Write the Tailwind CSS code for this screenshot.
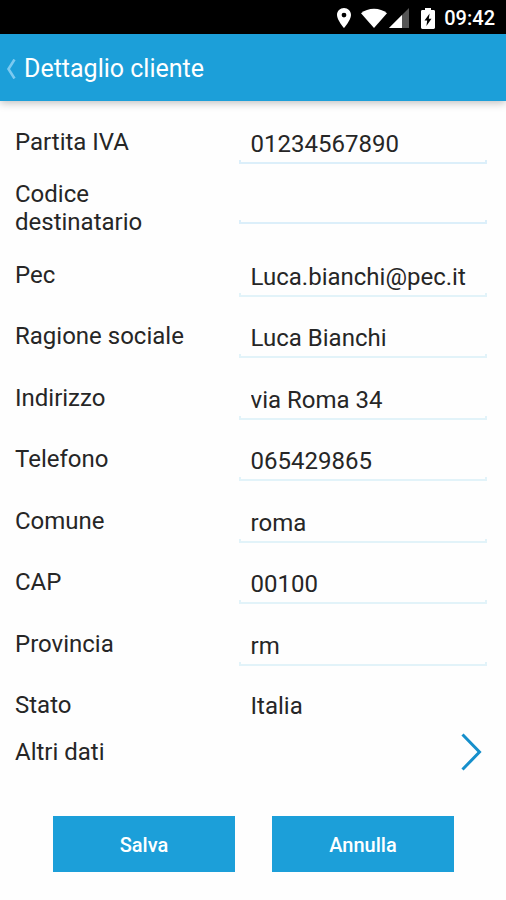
<!DOCTYPE html>
<html lang="it">
<head>
<meta charset="utf-8">
<meta name="viewport" content="width=device-width, initial-scale=1">
<title>Dettaglio cliente</title>
<script src="https://cdn.jsdelivr.net/npm/@tailwindcss/browser@4"></script>
</head>
<body class="flex min-h-screen flex-col bg-[#fefefe] font-[Roboto,sans-serif] text-[24px] leading-7 text-[#262626]">
  <div class="flex h-[34px] items-center justify-end bg-black pt-[2px] pr-[11px] text-white">
    <svg class="mr-[10px] h-5 w-[14px]" viewBox="0 0 14 20" fill="currentColor" aria-hidden="true"><path fill-rule="evenodd" d="M7 0C3.100 0 0 3 0 7c0 5 7 13 7 13s7-8 7-13c0-4-3.100-7-7-7Zm0 4.700a2.400 2.400 0 1 1 0 4.800 2.400 2.400 0 0 1 0-4.800Z"/></svg>
    <svg class="mr-[2px] h-5 w-[26px]" viewBox="0 0 26 20" fill="currentColor" aria-hidden="true"><path d="M0 5.200C3.500 2.300 8 .7 13 .7s9.500 1.600 13 4.500L13 20Z"/></svg>
    <svg class="mr-3 h-5 w-5" viewBox="0 0 20 20" aria-hidden="true"><path fill="#555" d="M20 0v20H0Z"/><path fill="#fff" d="M13 7v13H0Z"/></svg>
    <svg class="mr-[9px] h-[21px] w-[14px]" viewBox="0 0 14 21" aria-hidden="true"><path fill="#fff" d="M4 0h6v2h2.600C13.400 2 14 2.600 14 3.400v16.200c0 .8-.6 1.400-1.400 1.400H1.400C.6 21 0 20.400 0 19.600V3.400C0 2.600.6 2 1.400 2H4Z"/><path fill="#000" d="M8.600 5.500 3.500 12.500h2.700l-.8 5.500 5.100-7.200H7.800Z"/></svg>
    <time class="text-[20px] font-medium">09:42</time>
  </div>
  <header class="flex h-[67px] items-center bg-[#1c9fd9] pt-[3px] pl-[6px] text-white shadow-[0_2px_8px_rgba(0,0,0,0.25)]">
    <button type="button" aria-label="Indietro" class="mr-2"><svg class="h-5 w-[10px]" viewBox="0 0 10 20" fill="none" stroke="#7ccaf0" stroke-width="2.600" aria-hidden="true"><path d="M8.500.5 2.500 10l6 9.500"/></svg></button>
    <h1 class="text-[25px]">Dettaglio cliente</h1>
  </header>
  <form class="flex flex-1 flex-col pt-[10px] pb-7">
    <div class="flex flex-1 flex-col pr-[19px] pl-[15px]">
      <div class="grid grow basis-[60px] grid-cols-[9fr_10fr] items-center">
        <label for="iva">Partita IVA</label>
        <div class="flex h-11 flex-col justify-end"><input id="iva" value="01234567890" class="h-8 w-full min-w-0 px-3 outline-none"><span class="h-1 border-x-2 border-b-2 border-[#dceffa]"></span></div>
      </div>
      <div class="grid grow basis-[70px] grid-cols-[9fr_10fr] items-center">
        <label for="dest" class="pr-12">Codice destinatario</label>
        <div class="flex h-8 flex-col justify-end"><input id="dest" value="" class="h-7 w-full min-w-0 px-3 outline-none"><span class="h-1 border-x-2 border-b-2 border-[#dceffa]"></span></div>
      </div>
      <div class="grid grow basis-[60px] grid-cols-[9fr_10fr] items-center">
        <label for="pec">Pec</label>
        <div class="flex h-11 flex-col justify-end"><input id="pec" value="Luca.bianchi@pec.it" class="h-8 w-full min-w-0 px-3 outline-none"><span class="h-1 border-x-2 border-b-2 border-[#e2f3f9]"></span></div>
      </div>
      <div class="grid grow basis-[60px] grid-cols-[9fr_10fr] items-center">
        <label for="rag">Ragione sociale</label>
        <div class="flex h-11 flex-col justify-end"><input id="rag" value="Luca Bianchi" class="h-8 w-full min-w-0 px-3 outline-none"><span class="h-1 border-x-2 border-b-2 border-[#e2f3f9]"></span></div>
      </div>
      <div class="grid grow basis-[60px] grid-cols-[9fr_10fr] items-center">
        <label for="ind">Indirizzo</label>
        <div class="flex h-11 flex-col justify-end"><input id="ind" value="via Roma 34" class="h-8 w-full min-w-0 px-3 outline-none"><span class="h-1 border-x-2 border-b-2 border-[#e2f3f9]"></span></div>
      </div>
      <div class="grid grow basis-[60px] grid-cols-[9fr_10fr] items-center">
        <label for="tel">Telefono</label>
        <div class="flex h-11 flex-col justify-end"><input id="tel" value="065429865" class="h-8 w-full min-w-0 px-3 outline-none"><span class="h-1 border-x-2 border-b-2 border-[#e2f3f9]"></span></div>
      </div>
      <div class="grid grow basis-[60px] grid-cols-[9fr_10fr] items-center">
        <label for="com">Comune</label>
        <div class="flex h-11 flex-col justify-end"><input id="com" value="roma" class="h-8 w-full min-w-0 px-3 outline-none"><span class="h-1 border-x-2 border-b-2 border-[#e2f3f9]"></span></div>
      </div>
      <div class="grid grow basis-[60px] grid-cols-[9fr_10fr] items-center">
        <label for="cap">CAP</label>
        <div class="flex h-11 flex-col justify-end"><input id="cap" value="00100" class="h-8 w-full min-w-0 px-3 outline-none"><span class="h-1 border-x-2 border-b-2 border-[#e2f3f9]"></span></div>
      </div>
      <div class="grid grow basis-[60px] grid-cols-[9fr_10fr] items-center">
        <label for="prov">Provincia</label>
        <div class="flex h-11 flex-col justify-end"><input id="prov" value="rm" class="h-8 w-full min-w-0 px-3 outline-none"><span class="h-1 border-x-2 border-b-2 border-[#e2f3f9]"></span></div>
      </div>
      <div class="grid grow basis-[60px] grid-cols-[9fr_10fr] items-center">
        <label for="stato">Stato</label>
        <select id="stato" class="h-10 w-full appearance-none px-3 pt-[2px] outline-none"><option>Italia</option></select>
      </div>
    </div>
    <button type="button" class="flex h-8 items-center justify-between pr-6 pl-[15px] text-left">
      <span>Altri dati</span>
      <svg class="h-10 w-[22px]" viewBox="0 0 22 40" fill="none" stroke="#168fcb" stroke-width="3" aria-hidden="true"><path d="M2.500 2.500 19.500 20 2.500 37.500"/></svg>
    </button>
    <div class="mt-12 grid grid-cols-2 gap-[37px] pr-[52px] pl-[53px] text-[20px] font-medium text-white">
      <button type="submit" class="h-14 bg-[#1c9fd9] pt-[2px]">Salva</button>
      <button type="button" class="h-14 bg-[#1c9fd9] pt-[2px]">Annulla</button>
    </div>
  </form>
</body>
</html>
